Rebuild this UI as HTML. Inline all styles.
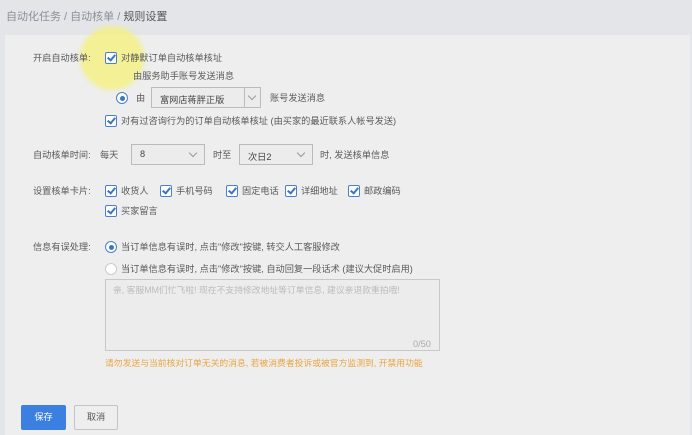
<!DOCTYPE html>
<html><head><meta charset="utf-8"><style>
*{margin:0;padding:0;box-sizing:border-box}
body{width:692px;height:435px;overflow:hidden;background:#e3e5e9;font-family:"Liberation Sans","Noto Sans CJK SC",sans-serif;font-size:9.2px;color:#5a5a5a;position:relative}
.a{position:absolute;white-space:nowrap;line-height:12px}
.cb{position:absolute;width:12px;height:12px;border:1px solid #4a7fd0;background:#fff;border-radius:2px}
.cb:after{content:"";position:absolute;left:3px;top:0px;width:3px;height:6px;border:solid #3a74c9;border-width:0 2px 2px 0;transform:rotate(40deg)}
.rd{position:absolute;width:12px;height:12px;border:1px solid #4a7fd0;border-radius:50%;background:#fff}
.rd.on:after{content:"";position:absolute;left:2.5px;top:2.5px;width:5px;height:5px;border-radius:50%;background:#3a74c9}
.rd.off{border-color:#ccc}
.sel{position:absolute;border:1px solid #bbb;background:#ececec;height:21px}
.sel span{position:absolute;left:8px;top:4px;color:#444}
.arr{position:absolute;right:8px;top:5px;width:6px;height:6px;border:solid #999;border-width:0 1px 1px 0;transform:rotate(45deg)}
</style></head><body>
<div class="a" style="left:6px;top:10px;font-size:11px;line-height:14px;color:#8a8f98">自动化任务 / 自动核单 / <span style="color:#555">规则设置</span></div>
<div style="position:absolute;left:5px;top:35px;width:685px;height:400px;background:#eeeeee"></div>
<div style="position:absolute;left:80px;top:26px;width:64px;height:64px;border-radius:50%;background:rgba(245,240,120,.75);filter:blur(2px)"></div>

<div class="a" style="left:33px;top:52px">开启自动核单:</div>
<div class="cb" style="left:105px;top:52px"></div>
<div class="a" style="left:121px;top:52px">对静默订单自动核单核址</div>
<div class="a" style="left:133px;top:70px">由服务助手账号发送消息</div>
<div class="rd on" style="left:116px;top:92px"></div>
<div class="a" style="left:136px;top:92px">由</div>
<div class="sel" style="left:151px;top:87px;width:110px"><span>富网店蒋胖正版</span><div style="position:absolute;left:92px;top:0;width:1px;height:19px;background:#bbb"></div><div class="arr" style="right:5px"></div></div>
<div class="a" style="left:270px;top:92px">账号发送消息</div>
<div class="cb" style="left:105px;top:115px"></div>
<div class="a" style="left:121px;top:115px">对有过咨询行为的订单自动核单核址 (由买家的最近联系人帐号发送)</div>

<div class="a" style="left:33px;top:149px">自动核单时间:</div>
<div class="a" style="left:100px;top:149px">每天</div>
<div class="sel" style="left:131px;top:144px;width:74px"><span>8</span><div class="arr"></div></div>
<div class="a" style="left:213px;top:149px">时至</div>
<div class="sel" style="left:239px;top:144px;width:74px"><span>次日2</span><div class="arr"></div></div>
<div class="a" style="left:320px;top:149px">时, 发送核单信息</div>

<div class="a" style="left:33px;top:185px">设置核单卡片:</div>
<div class="cb" style="left:105px;top:185px"></div><div class="a" style="left:121px;top:185px">收货人</div>
<div class="cb" style="left:160px;top:185px"></div><div class="a" style="left:176px;top:185px">手机号码</div>
<div class="cb" style="left:226px;top:185px"></div><div class="a" style="left:242px;top:185px">固定电话</div>
<div class="cb" style="left:285px;top:185px"></div><div class="a" style="left:301px;top:185px">详细地址</div>
<div class="cb" style="left:348px;top:185px"></div><div class="a" style="left:364px;top:185px">邮政编码</div>
<div class="cb" style="left:105px;top:205px"></div><div class="a" style="left:121px;top:205px">买家留言</div>

<div class="a" style="left:33px;top:241px">信息有误处理:</div>
<div class="rd on" style="left:105px;top:241px"></div>
<div class="a" style="left:121px;top:241px">当订单信息有误时, 点击"修改"按键, 转交人工客服修改</div>
<div class="rd off" style="left:105px;top:263px"></div>
<div class="a" style="left:121px;top:263px">当订单信息有误时, 点击"修改"按键, 自动回复一段话术 (建议大促时启用)</div>
<div style="position:absolute;left:105px;top:279px;width:335px;height:72px;border:1px solid #c8c8c8;background:#ececec"></div>
<div class="a" style="left:113px;top:284px;color:#bbb;font-size:8.8px">亲, 客服MM们忙飞啦! 现在不支持修改地址等订单信息, 建议亲退款重拍哦!</div>
<div class="a" style="left:413px;top:338px;color:#aaa">0/50</div>
<div class="a" style="left:105px;top:357px;color:#e9a640;font-size:8.8px">请勿发送与当前核对订单无关的消息, 若被消费者投诉或被官方监测到, 开禁用功能</div>

<div style="position:absolute;left:21px;top:405px;width:45px;height:25px;background:#3b7fe0;border-radius:2px;color:#fff;text-align:center;line-height:25px">保存</div>
<div style="position:absolute;left:74px;top:405px;width:44px;height:25px;border:1px solid #c4c4c4;background:#eee;border-radius:2px;color:#555;text-align:center;line-height:23px">取消</div>
</body></html>
